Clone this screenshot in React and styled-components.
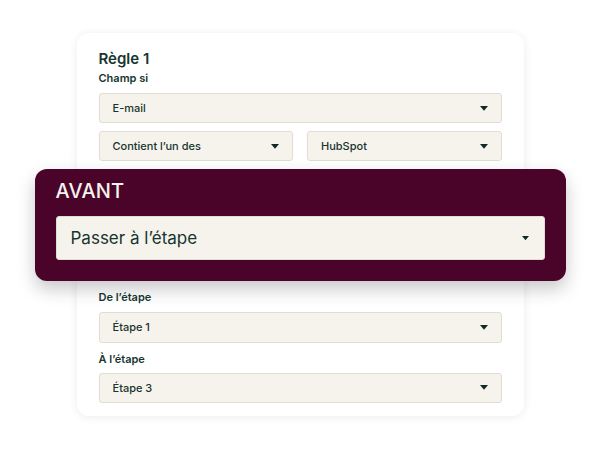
import React from 'react'
import styled, { createGlobalStyle } from 'styled-components'

const Global = createGlobalStyle`
  body {
    margin: 0;
    background: #ffffff;
    font-family: "Inter", "Noto Sans", sans-serif;
  }
`;

const Page = styled.div`
  width: 600px;
  height: 450px;
  display: flex;
  justify-content: center;
  padding-top: 33px;
  box-sizing: border-box;
`;

const Card = styled.div`
  width: 447px;
  height: 383px;
  box-sizing: border-box;
  background: #ffffff;
  border-radius: 12px;
  box-shadow: 0 1px 10px rgba(0, 0, 0, 0.08);
  padding: 16px 22px 13px;
  display: flex;
  flex-direction: column;
  color: #173530;
`;

const Title = styled.div`
  font-size: 15px;
  line-height: 20px;
  font-weight: 600;
`;

const Label = styled.div`
  font-size: 11px;
  line-height: 16px;
  font-weight: 600;
  margin-top: ${p => p.$top || 8}px;
`;

const Select = styled.div`
  height: ${p => p.$h || 30}px;
  box-sizing: border-box;
  flex: ${p => (p.$fixed ? 'none' : 1)};
  display: flex;
  align-items: center;
  justify-content: space-between;
  background: #f6f3ec;
  border: 1px solid #e2ddd3;
  border-radius: 3px;
  padding: 0 ${p => p.$pr || 13}px 0 ${p => p.$pl || 13}px;
  font-size: ${p => p.$fs || 11}px;
  font-weight: ${p => p.$fw || 500};
  color: #173530;
  margin-top: ${p => p.$top || 0}px;
`;

const Row = styled.div`
  display: flex;
  gap: 14px;
  margin-top: 8px;
`;

const Banner = styled.div`
  margin: 8px -64px 0;
  height: 112px;
  box-sizing: border-box;
  background: #4a0429;
  border-radius: 12px;
  box-shadow: 0 8px 18px rgba(0, 0, 0, 0.22);
  padding: 10px 21px 21px;
  display: flex;
  flex-direction: column;
`;

const BannerTitle = styled.div`
  font-size: 20px;
  line-height: 24px;
  font-weight: 500;
  color: #f6f3ec;
  letter-spacing: 0.2px;
  margin-bottom: 13px;
`;

const Caret = ({ size = 8 }) => (
  <svg width={size} height={size * 0.6} viewBox="0 0 10 6">
    <path d="M0 0 H10 L5 6 Z" fill="#0f2a26" />
  </svg>
)

const Dropdown = ({ children, caret, ...rest }) => (
  <Select {...rest}>
    <span>{children}</span>
    <Caret size={caret} />
  </Select>
)

export default function App() {
  return (
    <Page>
      <Global />
      <Card>
        <Title>Règle 1</Title>
        <Label $top={1}>Champ si</Label>
        <Dropdown $top={7}>E-mail</Dropdown>
        <Row>
          <Dropdown>Contient l’un des</Dropdown>
          <Dropdown>HubSpot</Dropdown>
        </Row>
        <Banner>
          <BannerTitle>AVANT</BannerTitle>
          <Dropdown $fixed $h={44} $fs={17} $fw={400} $pl={14} $pr={15} caret={7}>
            Passer à l’étape
          </Dropdown>
        </Banner>
        <Label>De l’étape</Label>
        <Dropdown $top={7}>Étape 1</Dropdown>
        <Label>À l’étape</Label>
        <Dropdown $top={6}>Étape 3</Dropdown>
      </Card>
    </Page>
  )
}
